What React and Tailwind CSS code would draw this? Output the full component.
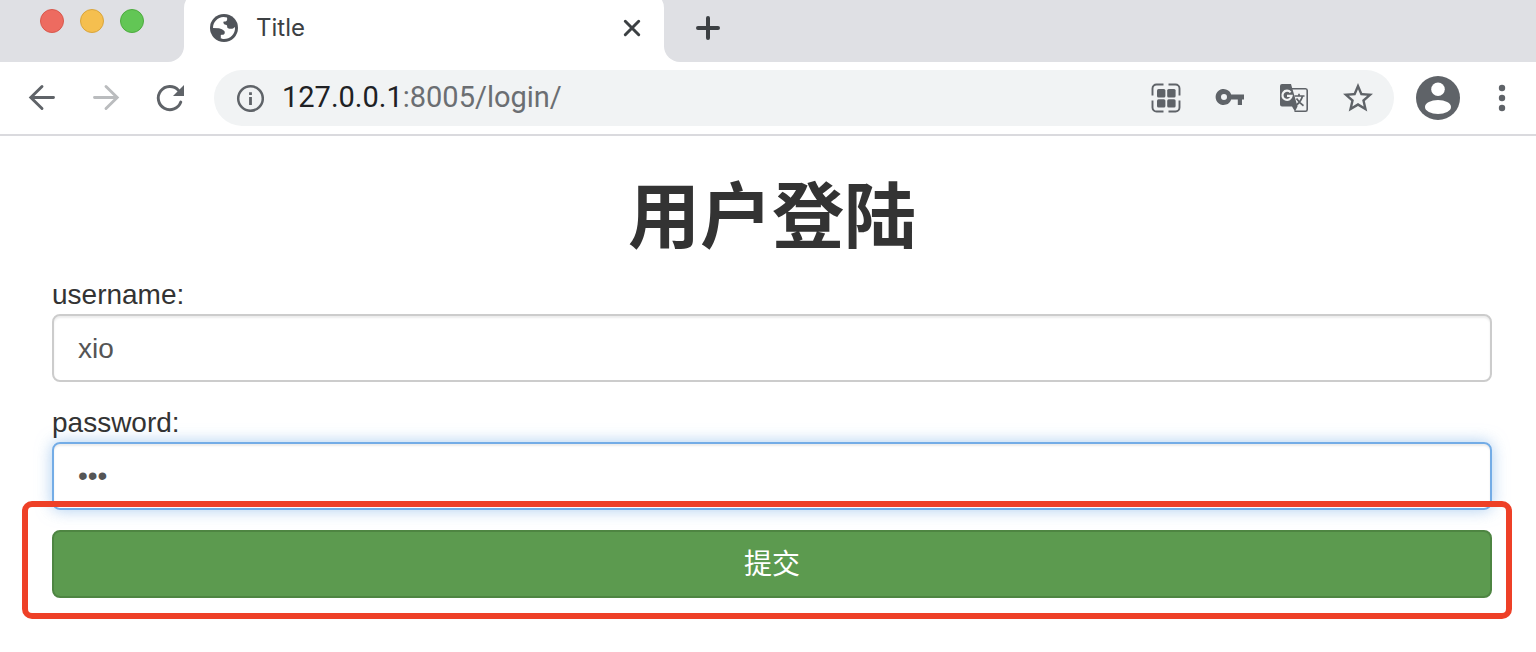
import { useState } from 'react'

const GlobeIcon = () => (
  <svg viewBox="0 0 28 28" className="size-7 shrink-0" aria-hidden="true">
    <circle cx="14" cy="14" r="14" fill="#50545a" />
    <path
      d="M3 14C3 8 7.500 3.400 13.500 3L17 3.500C17.500 5.500 17 7.200 15.500 7.500H13.800C13 7.800 13.400 9.300 14 10C14.500 11 16.800 10.500 17 11.500C17.300 12.700 17 13.800 18 14.300C19.500 15 22 15 23 14.500L25 13C25.500 20.500 20 25 14 25C12.500 25 11.500 24.800 10.800 24.500V21C12 20.600 14 21 14.500 19.800C15 18.500 14.800 17.500 14 16.800C13 15.500 11 15 9 14.200Z"
      fill="#fff"
    />
  </svg>
)

const BackIcon = () => (
  <svg viewBox="0 0 32 32" className="size-8" fill="none" stroke="currentColor" strokeWidth="2.9" strokeLinecap="round" aria-hidden="true">
    <path d="M27.500 15.500H5M16 4.500L4.800 15.500L16 26.500" />
  </svg>
)

const ForwardIcon = () => (
  <svg viewBox="0 0 32 32" className="size-8" fill="none" stroke="currentColor" strokeWidth="2.9" strokeLinecap="round" aria-hidden="true">
    <path d="M4.500 15.500H27M16 4.500L27.200 15.500L16 26.500" />
  </svg>
)

const ReloadIcon = () => (
  <svg viewBox="0 0 32 32" className="size-8" aria-hidden="true">
    <path d="M26.800 20A11.600 11.600 0 1 1 24.400 8.200" fill="none" stroke="currentColor" strokeWidth="2.9" strokeLinecap="round" />
    <path d="M30 3V14H19Z" fill="currentColor" />
  </svg>
)

const InfoIcon = () => (
  <svg viewBox="0 0 28 28" className="size-7 shrink-0" aria-hidden="true">
    <circle cx="14.500" cy="14.500" r="12.300" fill="none" stroke="#5f6368" strokeWidth="2.5" />
    <path d="M13.100 8.200h2.800v2.800h-2.800zM13.100 13h2.800v8h-2.800z" fill="#5f6368" />
  </svg>
)

const QrIcon = () => (
  <svg viewBox="0 0 30 30" className="size-[30px]" aria-hidden="true">
    <path
      d="M1.500 12.500V5.500A4 4 0 0 1 5.500 1.500H12.500M17.500 1.500H24.500A4 4 0 0 1 28.500 5.500V12.500M28.500 17.500V24.500A4 4 0 0 1 24.500 28.500H17.500M12.500 28.500H5.500A4 4 0 0 1 1.500 24.500V17.500"
      fill="none"
      stroke="currentColor"
      strokeWidth="1.900"
    />
    <g fill="currentColor">
      <rect x="6" y="6" width="8.400" height="8.400" rx="1.500" />
      <rect x="16.200" y="6" width="8.400" height="8.400" rx="1.500" />
      <rect x="6" y="16.200" width="8.400" height="8.400" rx="1.500" />
      <rect x="16.200" y="16.200" width="8.400" height="8.400" rx="1.500" />
    </g>
  </svg>
)

const KeyIcon = () => (
  <svg viewBox="0 0 30 30" className="size-[30px]" aria-hidden="true">
    <path
      d="M16.200 11.500A8 8 0 1 0 16.200 16.500H22.800V22H27V16.500H29V11.500ZM9 11A3 3 0 1 1 9 17A3 3 0 1 1 9 11Z"
      fill="currentColor"
      fillRule="evenodd"
    />
  </svg>
)

const TranslateIcon = () => (
  <svg viewBox="0 0 30 30" className="size-[30px]" aria-hidden="true">
    <path d="M13 5.800H26.500A1.800 1.800 0 0 1 28.200 7.600V26.400A1.800 1.800 0 0 1 26.500 28.200H15.500" fill="none" stroke="currentColor" strokeWidth="1.600" />
    <path d="M3 1H12L18.500 23.500H3A2 2 0 0 1 1 21.500V3A2 2 0 0 1 3 1ZM13 23.500H18.500L16 28.500Z" fill="currentColor" />
    <path d="M11.600 9.400A4.600 4.600 0 1 0 12.600 12.900H8" fill="none" stroke="#f1f3f4" strokeWidth="2.200" />
    <path d="M15.500 13H25.500M20 10.800V13M23.500 13C22.500 17 20 20 17.500 22M17.500 15.500C19.500 18.500 22 21 24.500 22.800" fill="none" stroke="currentColor" strokeWidth="1.700" />
  </svg>
)

const StarIcon = () => (
  <svg viewBox="2 2 20 20" className="size-[30px]" aria-hidden="true">
    <path
      d="M22 9.240l-7.190-.620L12 2 9.190 8.630 2 9.240l5.460 4.730L5.820 21 12 17.270 18.180 21l-1.630-7.030L22 9.240zM12 15.400l-3.760 2.270 1-4.280-3.320-2.880 4.380-.380L12 6.100l1.710 4.040 4.380.380-3.320 2.880 1 4.280L12 15.400z"
      fill="currentColor"
    />
  </svg>
)

const ProfileIcon = () => (
  <svg viewBox="0 0 44 44" className="size-11" aria-hidden="true">
    <circle cx="22" cy="22" r="22" fill="#5f6368" />
    <circle cx="22" cy="13.300" r="6.800" fill="#fff" />
    <ellipse cx="22" cy="31" rx="13" ry="7" fill="#fff" />
  </svg>
)

const TabStrip = () => (
  <div className="flex h-[62px]">
    <div className="flex w-[184px] shrink-0 gap-4 rounded-br-2xl bg-[#dfe0e4] pl-10 pt-[9px]">
      <button aria-label="Close window" className="size-6 rounded-full border border-[#d8584c] bg-[#ed6b60]" />
      <button aria-label="Minimize window" className="size-6 rounded-full border border-[#d9a53c] bg-[#f5bf4f]" />
      <button aria-label="Zoom window" className="size-6 rounded-full border border-[#4dab3e] bg-[#62c655]" />
    </div>
    <div className="w-[480px] overflow-hidden bg-[linear-gradient(#dfe0e4_50%,#fff_50%)]">
      <div className="-mt-2 flex h-[70px] items-center rounded-t-2xl bg-white pl-[26px] pr-[22px] pt-[2px]">
        <GlobeIcon />
        <span className="ml-[18px] flex-1 font-[Inter,sans-serif] text-[24px] text-[#3c4043]">Title</span>
        <button aria-label="Close tab" className="text-[#3c4043]">
          <svg viewBox="0 0 20 20" className="size-5" fill="none" stroke="currentColor" strokeWidth="3" strokeLinecap="round" aria-hidden="true">
            <path d="M3.300 3.300L16.700 16.700M16.700 3.300L3.300 16.700" />
          </svg>
        </button>
      </div>
    </div>
    <div className="flex flex-1 items-start rounded-bl-2xl bg-[#dfe0e4] pl-8 pt-4">
      <button aria-label="New tab" className="text-[#3c4043]">
        <svg viewBox="0 0 24 24" className="size-6" fill="none" stroke="currentColor" strokeWidth="4" strokeLinecap="round" aria-hidden="true">
          <path d="M12 2V22M2 12H22" />
        </svg>
      </button>
    </div>
  </div>
)

const Toolbar = () => (
  <div className="flex h-[74px] items-center border-b-2 border-[#dadade] pl-[26px] pr-[30px] text-[#5f6368]">
    <div className="flex gap-8">
      <button aria-label="Back"><BackIcon /></button>
      <button aria-label="Forward" className="text-[#babcbe]"><ForwardIcon /></button>
      <button aria-label="Reload"><ReloadIcon /></button>
    </div>
    <div className="ml-7 flex h-14 flex-1 items-center rounded-full bg-[#f1f3f4] pl-[22px] pr-[21px]">
      <InfoIcon />
      <div className="ml-[18px] flex-1 font-[Roboto,sans-serif] text-[29px] text-[#6b6e72]">
        <span className="text-[#202124]">127.0.0.1</span>:8005/login/
      </div>
      <div className="flex gap-[34px]">
        <button aria-label="QR code"><QrIcon /></button>
        <button aria-label="Passwords"><KeyIcon /></button>
        <button aria-label="Translate"><TranslateIcon /></button>
        <button aria-label="Bookmark"><StarIcon /></button>
      </div>
    </div>
    <button aria-label="Profile" className="ml-[22px]"><ProfileIcon /></button>
    <button aria-label="Menu" className="ml-[38px]">
      <svg viewBox="0 0 8 28" className="h-7 w-2" fill="currentColor" aria-hidden="true">
        <circle cx="4" cy="4" r="3.200" />
        <circle cx="4" cy="14" r="3.200" />
        <circle cx="4" cy="24" r="3.200" />
      </svg>
    </button>
  </div>
)

const LoginForm = () => {
  const [username, setUsername] = useState('xio')
  const [password, setPassword] = useState('123')

  return (
    <form
      onSubmit={(e) => e.preventDefault()}
      className="pl-[52px] pr-11 pt-[42px] font-['Liberation_Sans','Noto_Sans_CJK_SC',sans-serif] text-[28px] leading-10 text-[#333]"
    >
      <h1 className="mb-[18px] text-center text-[72px] font-bold leading-[78px]">用户登陆</h1>

      <div className="mb-5">
        <label htmlFor="username" className="block pt-[2px] leading-[38px]">username:</label>
        <input
          id="username"
          type="text"
          value={username}
          onChange={(e) => setUsername(e.target.value)}
          className="block h-[68px] w-full rounded-lg border-2 border-[#ccc] px-6 pt-[2px] text-[#555] shadow-[inset_0_2px_2px_rgba(0,0,0,0.075)] outline-none"
        />
      </div>

      <div className="mb-5">
        <label htmlFor="password" className="block pt-[2px] leading-[38px]">password:</label>
        <input
          id="password"
          type="password"
          value={password}
          onChange={(e) => setPassword(e.target.value)}
          className="block h-[68px] w-full rounded-lg border-2 border-[#73ace6] px-6 text-[#555] shadow-[inset_0_2px_2px_rgba(0,0,0,0.075),0_0_16px_rgba(115,172,230,0.6)] outline-none"
        />
      </div>

      <div className="relative">
        <button type="submit" className="block h-[68px] w-full rounded-lg border-2 border-[#4e8542] bg-[#5c9a4f] pt-[2px] text-white">
          提交
        </button>
        {/* Highlight around the submit button */}
        <div className="pointer-events-none absolute -bottom-[21px] -left-[30px] -right-5 -top-[29px] rounded-[10px] border-6 border-[#ee4027]" />
      </div>
    </form>
  )
}

const App = () => (
  <div className="min-h-screen bg-white">
    <TabStrip />
    <Toolbar />
    <LoginForm />
  </div>
)

export default App
